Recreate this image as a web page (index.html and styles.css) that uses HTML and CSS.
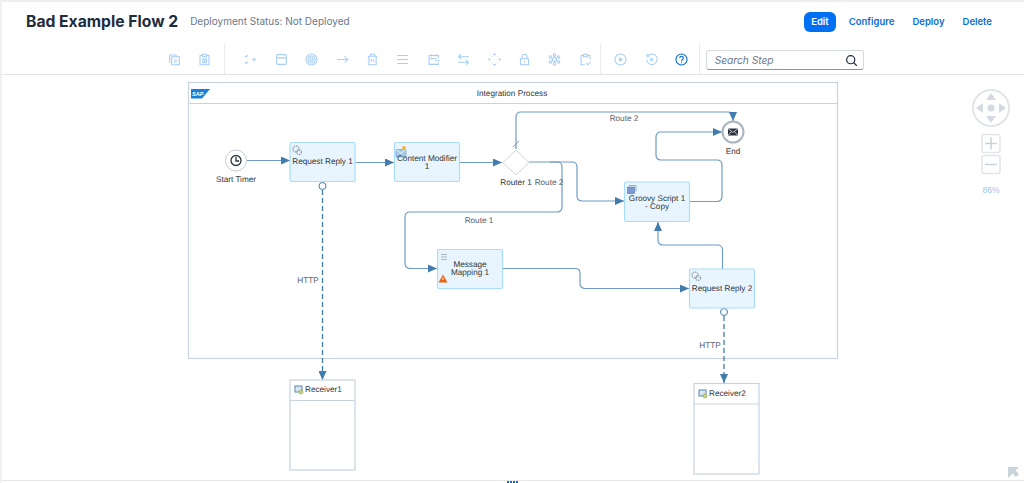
FILE: index.html
```html
<!DOCTYPE html>
<html lang="en">

<head>
    <meta charset="UTF-8">
    <title>Bad Example Flow 2</title>
    <link rel="stylesheet" href="styles.css">
</head>

<body>
    <div class="app">
        <!-- title row -->
        <header class="head">
            <h1 class="title">Bad Example Flow 2</h1>
            <span class="status">Deployment Status: Not Deployed</span>
            <nav class="actions">
                <a class="action active">Edit</a>
                <a class="action">Configure</a>
                <a class="action">Deploy</a>
                <a class="action">Delete</a>
            </nav>
        </header>

        <!-- toolbar -->
        <div class="toolbar">
            <div class="group group-first">
                <span class="tool"><svg viewBox="0 0 16 16"><path d="M3 11.500H2V2.500h8V4M4.500 4.500h9.500v10H4.500zM7 8.500h4.500M7 11h4.500"/></svg></span>
                <span class="tool"><svg viewBox="0 0 16 16"><path d="M5 3H2.500v11.500h11V3H11M5.500 1.500h5v3h-5zM6 7.500h4.500V12H6zM8.200 7.500V12"/></svg></span>
            </div>
            <div class="group group-main">
                <span class="tool"><svg viewBox="0 0 16 16"><path d="M1 3.500l1.500 1.500L5 2.500M1 11.500l1.500 1.500L5 10.500M10 8h5M12.500 5.500v5"/></svg></span>
                <span class="tool"><svg viewBox="0 0 16 16"><path d="M3.500 2h9a1.500 1.500 0 0 1 1.500 1.500v9a1.500 1.500 0 0 1-1.500 1.500h-9A1.500 1.500 0 0 1 2 12.500v-9A1.500 1.500 0 0 1 3.500 2zM2 6h12"/></svg></span>
                <span class="tool"><svg viewBox="0 0 16 16"><circle cx="8" cy="8" r="6.800"/><circle cx="8" cy="8" r="4.300"/><circle cx="8" cy="8" r="2"/></svg></span>
                <span class="tool"><svg viewBox="0 0 16 16"><path d="M1.500 8h13M10.500 4l4 4-4 4"/></svg></span>
                <span class="tool"><svg viewBox="0 0 16 16"><path d="M2 4h12M5.500 4V1.500h5V4M3.500 4v10.500h9V4M6.500 7.500v4M9.500 7.500v4"/></svg></span>
                <span class="tool"><svg viewBox="0 0 16 16"><path d="M1.500 3h13M1.500 8h13M1.500 13h13"/></svg></span>
                <span class="tool"><svg viewBox="0 0 16 16"><path d="M14 6V3H2.500v11H14v-2M5.500 1.500v3M11 1.500v3M2.500 7H12M10 9.500h5.500"/></svg></span>
                <span class="tool"><svg viewBox="0 0 16 16"><path d="M14.500 4.500H2M5 1.500l-3 3 3 3M1.500 11.500H14M11 8.500l3 3-3 3"/></svg></span>
                <span class="tool"><svg viewBox="0 0 16 16"><path d="M6.500 2.500L8 1l1.500 1.500M6.500 13.500L8 15l1.500-1.500M2.500 6.500L1 8l1.500 1.500M13.500 6.500L15 8l-1.500 1.500M4 4.500L4.500 4M11.500 4l.5.500M4 11.500l.5.500M11.500 12l.5-.5"/></svg></span>
                <span class="tool"><svg viewBox="0 0 16 16"><path d="M3 7h10v7.500H3zM5 7V4.500a3 3 0 0 1 6 0V7M8 10v2"/></svg></span>
                <span class="tool"><svg viewBox="0 0 16 16"><circle cx="8" cy="8" r="2.500"/><circle cx="8" cy="2.500" r="1.500"/><circle cx="8" cy="13.500" r="1.500"/><circle cx="3" cy="5" r="1.500"/><circle cx="13" cy="5" r="1.500"/><circle cx="3" cy="11" r="1.500"/><circle cx="13" cy="11" r="1.500"/></svg></span>
                <span class="tool"><svg viewBox="0 0 16 16"><path d="M5 3H2.500v11.500H7M11 3h2.500v5M5.500 1.500h5v3h-5zM9 12.500l2 2 3-3.500"/></svg></span>
            </div>
            <div class="group group-run">
                <span class="tool"><svg viewBox="0 0 16 16"><circle cx="8" cy="8" r="6.800"/><path class="solid" d="M6.300 5l4.700 3-4.700 3z"/></svg></span>
                <span class="tool"><svg viewBox="0 0 16 16"><path d="M3.500 3.500A6.500 6.500 0 1 1 2 8M2.500 1v3h3M6.200 6.200l3.800 3.800M10 6.200l-3.800 3.800"/></svg></span>
                <span class="tool tool-on"><svg viewBox="0 0 16 16"><circle cx="8" cy="8" r="6.800"/><path d="M5.800 6.200a2.200 2.200 0 1 1 3.500 1.800C8.400 8.600 8 9 8 10M8 11.300v1.200"/></svg></span>
            </div>
            <div class="group group-search">
                <div class="search">
                    <span class="search-text">Search Step</span>
                    <svg class="search-icon" viewBox="0 0 16 16"><circle cx="7" cy="7" r="5"/><path d="M10.700 10.700L14.500 14.500"/></svg>
                </div>
            </div>
        </div>

        <!-- model canvas -->
        <main class="canvas">
            <svg class="diagram" viewBox="0 75 1024 405">
                <defs>
                    <marker id="head" markerWidth="9" markerHeight="8" refX="9" refY="4" orient="auto" markerUnits="userSpaceOnUse">
                        <path class="head" d="M0 0L9 4L0 8z"/>
                    </marker>
                </defs>

                <!-- process -->
                <rect class="pool" x="188.500" y="82.500" width="649" height="276"/>
                <path class="pool-line" d="M188.500 103.500H837.500"/>
                <path class="sap" d="M191 89H210L202 98.500H191z"/>
                <text class="sap-text" x="192" y="96">SAP</text>
                <text class="label" x="512" y="96">Integration Process</text>

                <!-- connections -->
                <path class="flow" marker-end="url(#head)" d="M247 160.500H290"/>
                <path class="flow" marker-end="url(#head)" d="M355 162.500H394"/>
                <path class="flow" marker-end="url(#head)" d="M460 162.500H502"/>
                <path class="flow" marker-end="url(#head)" d="M516 149V117Q516 112 521 112H728Q733 112 733 117V121"/>
                <path class="flow-thin" d="M513 147L519 141"/>
                <path class="flow" marker-end="url(#head)" d="M529 162H572Q577 162 577 167V196Q577 201 582 201H624"/>
                <path class="flow" marker-end="url(#head)" d="M550 162H557Q562 162 562 167V207Q562 212 557 212H410Q405 212 405 217V263Q405 268.500 410 268.500H437"/>
                <path class="flow" marker-end="url(#head)" d="M503 268.500H575Q580 268.500 580 273V283Q580 288.500 585 288.500H689"/>
                <path class="flow" marker-end="url(#head)" d="M722.500 269V250Q722.500 245 717 245H663Q658 245 658 240V222"/>
                <path class="flow" marker-end="url(#head)" d="M689 201.500H717Q722 201.500 722 196V165Q722 160 717 160H661Q656 160 656 155V137Q656 132 661 132H722"/>
                <path class="msg" marker-end="url(#head)" d="M322.500 190V380"/>
                <path class="msg" marker-end="url(#head)" d="M724 316V383"/>
                <circle class="port" cx="322.500" cy="186" r="3.500"/>
                <circle class="port" cx="724" cy="312" r="3.500"/>

                <!-- events -->
                <circle class="start" cx="236" cy="160.500" r="10.500"/>
                <circle class="clock" cx="236" cy="160.500" r="5"/>
                <path class="clock" d="M236 157V161H239"/>
                <text class="label" x="236" y="182">Start Timer</text>
                <circle class="end" cx="733" cy="132" r="10.500"/>
                <circle class="end-in" cx="733" cy="132" r="6"/>
                <path class="end-mail" d="M728 128.500h10v7h-10z"/>
                <path class="end-flap" d="M728 128.500l5 4 5-4M728 135.500l3.500-4M738 135.500l-3.500-4"/>
                <text class="label" x="733" y="154">End</text>

                <!-- steps -->
                <rect class="step" x="290" y="142.500" width="65" height="39" rx="1.500"/>
                <g class="gears">
                    <circle cx="296" cy="149" r="3"/><circle cx="299" cy="152" r="2.500"/>
                </g>
                <text class="label" x="322.500" y="164">Request Reply 1</text>

                <rect class="step" x="394.500" y="142.500" width="65" height="39" rx="1.500"/>
                <path class="env" d="M396 149.500h10v7.500h-10z"/>
                <path class="env-line" d="M396 149.500l5 4 5-4"/>
                <circle class="dot-gold" cx="404" cy="148" r="2"/>
                <text class="label" x="427" y="161">Content Modifier</text>
                <text class="label" x="427" y="168.500">1</text>

                <path class="gate" d="M516 150L529 162.500L516 175L503 162.500z"/>
                <text class="label" x="516" y="185">Router 1</text>

                <rect class="step" x="624.500" y="182" width="65" height="39.500" rx="1.500"/>
                <path class="script" d="M627.500 187h7v6.500h-7z"/>
                <path class="script-back" d="M629 185.500h7v6"/>
                <text class="label" x="657" y="200.500">Groovy Script 1</text>
                <text class="label" x="657" y="208.500">- Copy</text>

                <rect class="step" x="437.500" y="249.500" width="65" height="39" rx="1.500"/>
                <path class="map-lines" d="M441 254.500h6M441 257h6M441 259.500h6"/>
                <path class="warn" d="M443 274.500l4.500 8h-9z"/>
                <path class="warn-mark" d="M443 277.500v2.500"/>
                <text class="label" x="470" y="267">Message</text>
                <text class="label" x="470" y="275">Mapping 1</text>

                <rect class="step" x="689.500" y="269" width="65" height="39" rx="1.500"/>
                <g class="gears">
                    <circle cx="695" cy="275" r="3"/><circle cx="698" cy="278" r="2.500"/>
                </g>
                <text class="label" x="722" y="291">Request Reply 2</text>

                <!-- route labels -->
                <text class="label dim" x="624" y="121">Route 2</text>
                <text class="label dim" x="549" y="185">Route 2</text>
                <text class="label dim" x="479" y="223">Route 1</text>
                <text class="label dim" x="308" y="283">HTTP</text>
                <text class="label dim" x="710" y="348">HTTP</text>

                <!-- receivers -->
                <rect class="pool" x="290" y="380" width="65" height="90"/>
                <path class="pool-line" d="M290 400.500H355"/>
                <rect class="sys" x="295" y="386" width="7" height="6"/>
                <circle class="sys-dot" cx="301" cy="392" r="2"/>
                <text class="label left" x="305" y="392">Receiver1</text>

                <rect class="pool" x="694" y="383.500" width="65" height="90.500"/>
                <path class="pool-line" d="M694 404H759"/>
                <rect class="sys" x="699" y="390" width="7" height="6"/>
                <circle class="sys-dot" cx="705" cy="396" r="2"/>
                <text class="label left" x="709" y="396">Receiver2</text>

                <!-- navigator -->
                <circle class="nav-ring" cx="991" cy="108" r="18"/>
                <path class="nav-fill" d="M991 93l5 7h-10zM991 123l5-7h-10zM976 108l7-5v10zM1006 108l-7-5v10z"/>
                <circle class="nav-fill" cx="991" cy="108" r="3.500"/>
                <rect class="nav-btn" x="982" y="134.500" width="18" height="18" rx="2"/>
                <path class="nav-mark" d="M985 143.500h12M991 137.500v12"/>
                <rect class="nav-btn" x="982" y="155.500" width="18" height="18" rx="2"/>
                <path class="nav-mark" d="M985 164.500h12"/>
                <text class="zoom" x="991" y="193">86%</text>
                <path class="corner" d="M1008 467h11l-3.500 3.500 3.500 3.500-3 3-3.500-3.500-4.500 4.500z"/>
            </svg>
        </main>

        <div class="grip"><span></span><span></span><span></span><span></span></div>
    </div>
</body>

</html>
```

FILE: styles.css
```css
* {
    margin: 0;
    padding: 0;
    box-sizing: border-box;
}

html,
body {
    width: 100%;
    height: 100%;
    overflow: hidden;
    background: #fff;
}

.app {
    position: relative;
    height: 483px;
    border-top: solid 2px #eceef0;
    border-left: solid 2px #f0f1f2;
    font-family: Inter, "Liberation Sans", sans-serif;
}

.head {
    display: flex;
    align-items: center;
    height: 42px;
    padding: 0 32px 2px 24px;
}

.title {
    margin-bottom: 2px;
    font-size: 15.700px;
    font-weight: 700;
    color: #1d2d3e;
}

.status {
    margin: 0 0 2px 12px;
    font-size: 10px;
    color: #6a7889;
}

.actions {
    display: flex;
    align-items: center;
    margin-left: auto;
}

.action {
    height: 20px;
    margin-left: 18px;
    font-size: 9.500px;
    font-weight: 600;
    line-height: 20px;
    color: #0a6ed1;
}

.action.active {
    padding: 0 7px;
    margin-right: -5px;
    border-radius: 6px;
    background: #0070f2;
    color: #fff;
}

.toolbar {
    display: flex;
    height: 31px;
    padding-left: 157px;
    border-bottom: solid 1px #e2e4e6;
}

.group {
    display: flex;
    align-items: center;
    height: 30px;
    border-right: solid 1px #e8eaec;
}

.group-first {
    padding-right: 4px;
}

.group-main {
    padding-left: 11px;
}

.group-run {
    padding: 0 2px 0 4px;
}

.group-search {
    padding: 2px 0 0 6px;
    border-right: 0;
}

.tool {
    display: flex;
    align-items: center;
    justify-content: center;
    width: 30.400px;
}

.tool svg {
    width: 13px;
    height: 13px;
    fill: none;
    stroke: #a6ccf7;
    stroke-width: 1.300;
}

.tool .solid {
    fill: #a6ccf7;
    stroke: none;
}

.tool-on svg {
    stroke: #0a6ed1;
    stroke-width: 1.400;
}

.search {
    display: flex;
    align-items: center;
    justify-content: space-between;
    width: 158px;
    height: 20px;
    padding: 0 5px 0 8px;
    border: solid 1px #d5dadd;
    border-bottom: solid 1px #8396a8;
    border-radius: 3px;
}

.search-text {
    font-size: 10.200px;
    font-style: italic;
    color: #6a7889;
}

.search-icon {
    width: 13px;
    height: 13px;
    fill: none;
    stroke: #1d2d3e;
    stroke-width: 1.500;
}

.canvas {
    height: 406px;
    border-bottom: solid 1px #e6e8ea;
}

.diagram {
    display: block;
    width: 1024px;
    height: 405px;
    margin-left: -2px;
}

.grip {
    position: absolute;
    left: 505px;
    bottom: 0;
    display: flex;
    gap: 1px;
}

.grip span {
    width: 2px;
    height: 2px;
    background: #0a6ed1;
}

.label {
    font-family: "Liberation Sans", Arial, sans-serif;
    font-size: 8.200px;
    text-anchor: middle;
    text-rendering: geometricPrecision;
    fill: #32363a;
}

.label.dim {
    fill: #55606b;
}

.label.left {
    text-anchor: start;
}

.pool {
    fill: #fff;
    stroke: #c9d3de;
    stroke-width: 1.200;
}

.pool-line {
    fill: none;
    stroke: #c9d3de;
    stroke-width: 1.200;
}

.sap {
    fill: #1a7fd6;
}

.sap-text {
    font-family: "Liberation Sans", Arial, sans-serif;
    font-size: 5.500px;
    font-weight: 700;
    font-style: italic;
    fill: #fff;
}

.flow {
    fill: none;
    stroke: #6f9cc4;
    stroke-width: 1.200;
}

.flow-thin {
    fill: none;
    stroke: #6f9cc4;
    stroke-width: 1;
}

.head {
    fill: #427cac;
}

.msg {
    fill: none;
    stroke: #427cac;
    stroke-width: 1.300;
    stroke-dasharray: 5 3;
}

.port {
    fill: #fff;
    stroke: #427cac;
    stroke-width: 1;
}

.start {
    fill: #fff;
    stroke: #c4ccd4;
    stroke-width: 1;
}

.clock {
    fill: none;
    stroke: #2b3540;
    stroke-width: 1.300;
}

.end {
    fill: #fff;
    stroke: #a9b4be;
    stroke-width: 2;
}

.end-in {
    fill: #fff;
}

.end-mail {
    fill: #2b3540;
}

.end-flap {
    fill: none;
    stroke: #fff;
    stroke-width: 0.700;
}

.step {
    fill: #e8f5fe;
    stroke: #a9dcf8;
    stroke-width: 1.200;
}

.gears circle {
    fill: none;
    stroke: #9aa3ab;
    stroke-width: 1.300;
    stroke-dasharray: 1.500 0.800;
}

.env {
    fill: #a9cbe8;
    stroke: #5f97c9;
    stroke-width: 0.600;
}

.env-line {
    fill: none;
    stroke: #fff;
    stroke-width: 0.700;
}

.dot-gold {
    fill: #f0b93a;
}

.gate {
    fill: #fff;
    stroke: #d0d5da;
    stroke-width: 1;
}

.script {
    fill: #7d9bd0;
    stroke: #4f72ad;
    stroke-width: 0.600;
}

.script-back {
    fill: none;
    stroke: #7d9bd0;
    stroke-width: 0.800;
}

.map-lines {
    fill: none;
    stroke: #a6b6c8;
    stroke-width: 1;
}

.warn {
    fill: #e9640f;
}

.warn-mark {
    fill: none;
    stroke: #fff;
    stroke-width: 1;
}

.sys {
    fill: #d8e6f4;
    stroke: #5c86ad;
    stroke-width: 1;
}

.sys-dot {
    fill: #c9d86f;
    stroke: #84915a;
    stroke-width: 0.500;
}

.nav-ring {
    fill: #fff;
    stroke: #e0e5ea;
    stroke-width: 2;
}

.nav-fill {
    fill: #d3dae1;
}

.nav-btn {
    fill: #fff;
    stroke: #e0e5ea;
    stroke-width: 1.500;
}

.nav-mark {
    fill: none;
    stroke: #c9d1d9;
    stroke-width: 1.500;
}

.zoom {
    font-family: "Liberation Sans", Arial, sans-serif;
    font-size: 8.500px;
    text-anchor: middle;
    fill: #9fc3ee;
}

.corner {
    fill: #c9d3dc;
}
```
